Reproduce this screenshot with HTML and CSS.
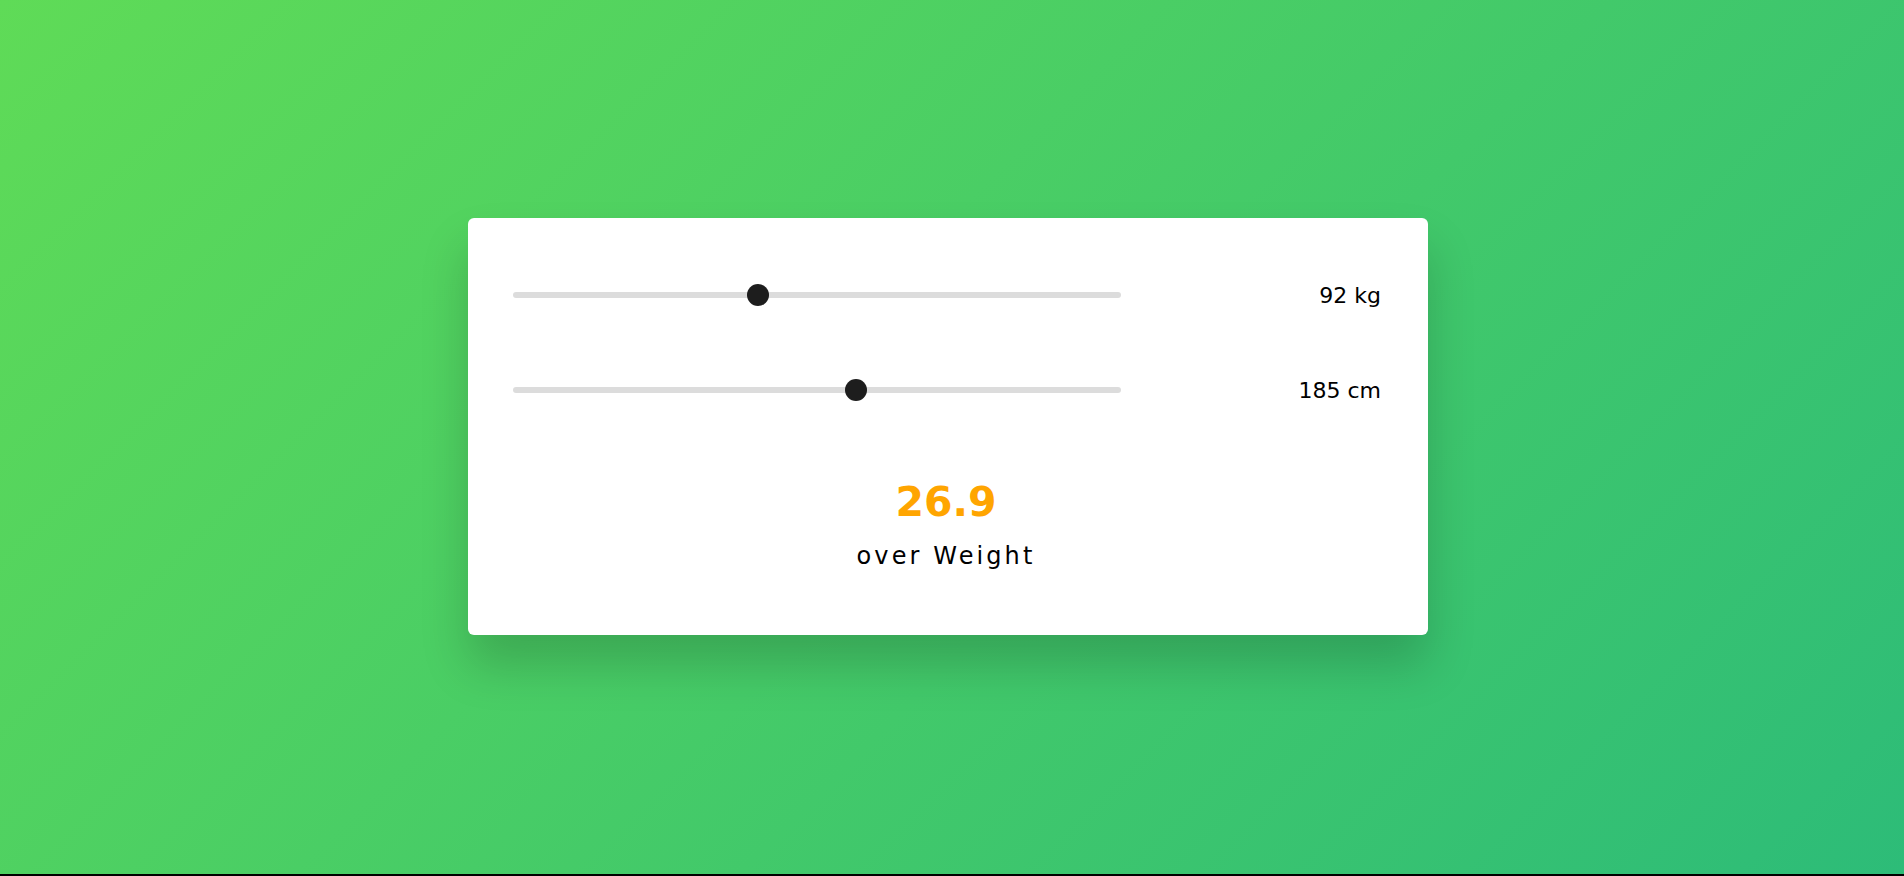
FILE: index.html
```html
<!DOCTYPE html>
<html lang="en">
<head>
<meta charset="utf-8">
<title>BMI Calculator</title>
<link rel="stylesheet" href="styles.css">
</head>
<body>
<main class="stage">
  <section class="card">
    <div class="row">
      <input class="slider" type="range" min="40" max="170" value="92" aria-label="Weight">
      <span class="value">92 kg</span>
    </div>
    <div class="row row-second">
      <input class="slider" type="range" min="100" max="250" value="185" aria-label="Height">
      <span class="value">185 cm</span>
    </div>
    <div class="result">
      <div class="bmi">26.9</div>
      <div class="status">over Weight</div>
    </div>
  </section>
</main>
</body>
</html>
```

FILE: styles.css
```css
html, body {
  margin: 0;
  padding: 0;
}

body {
  background: #000;
  font-family: "DejaVu Sans", "Noto Sans", sans-serif;
  color: #000;
}

.stage {
  height: 874px;
  box-sizing: border-box;
  background: linear-gradient(135deg, #5fdb57 0%, #2dbc78 100%);
  display: flex;
  justify-content: center;
  align-items: flex-start;
  padding-top: 218px;
  padding-right: 8px;
}

.card {
  width: 960px;
  box-sizing: border-box;
  background: #fff;
  border-radius: 6px;
  padding: 57px 47px 64px 45px;
  box-shadow: 0 30px 48px rgba(0, 0, 0, 0.18);
}

.row {
  display: grid;
  grid-template-columns: 608px 1fr;
  align-items: center;
  height: 40px;
}

.row-second {
  margin-top: 55px;
}

.slider {
  -webkit-appearance: none;
  appearance: none;
  width: 608px;
  height: 22px;
  margin: 0;
  padding: 0;
  background: transparent;
  outline: none;
}

.slider::-webkit-slider-runnable-track {
  height: 6px;
  background: #dcdcdc;
  border-radius: 3px;
}

.slider::-webkit-slider-thumb {
  -webkit-appearance: none;
  appearance: none;
  width: 22px;
  height: 22px;
  border-radius: 50%;
  background: #1d1d1d;
  margin-top: -8px;
  border: none;
}

.value {
  justify-self: end;
  font-size: 22px;
  color: #000;
}

.result {
  margin-top: 68px;
  display: flex;
  flex-direction: column;
  align-items: center;
  margin-right: 2px;
}

.bmi {
  font-size: 41px;
  font-weight: 700;
  line-height: 1.2;
  color: #ffa500;
}

.status {
  margin-top: 15px;
  font-size: 24px;
  line-height: 1.2;
  letter-spacing: 3.1px;
  color: #000;
}
```
